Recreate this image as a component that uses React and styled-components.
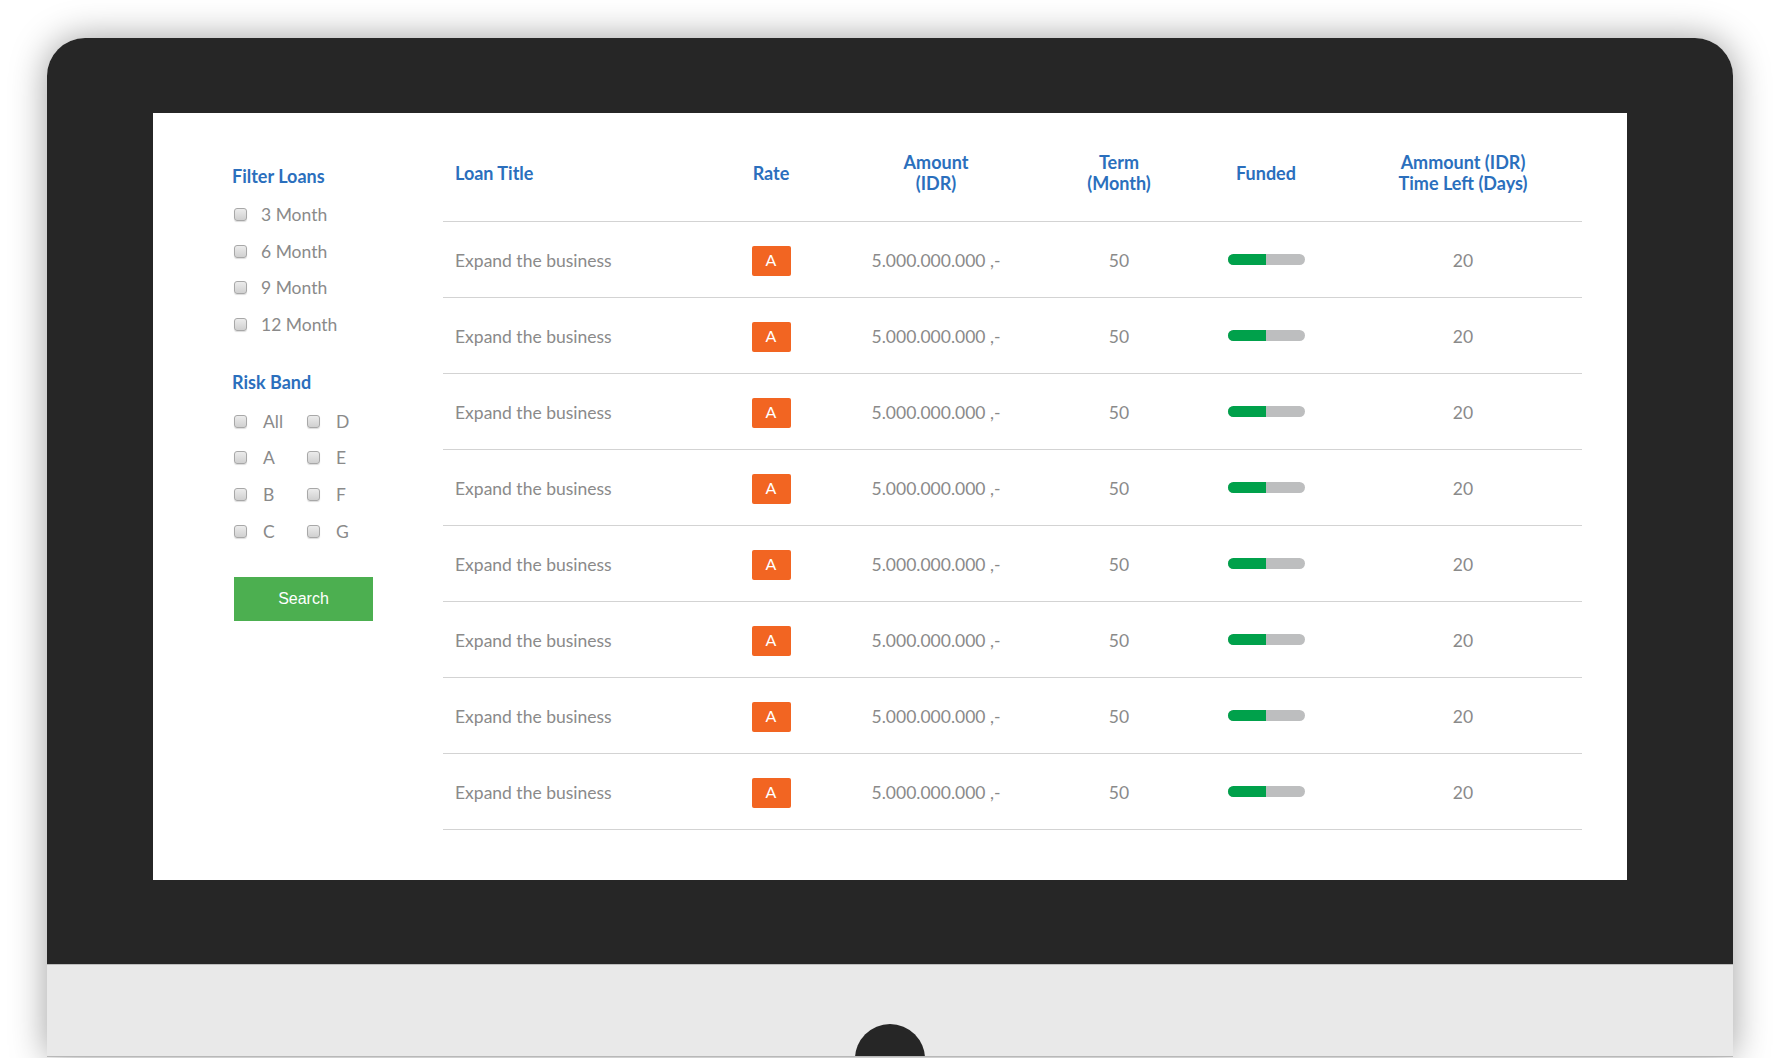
import React from "react";
import styled, { createGlobalStyle } from "styled-components";

const GlobalStyle = createGlobalStyle`
  html, body {
    margin: 0;
    padding: 0;
    background: #ffffff;
    overflow: hidden;
  }
  body {
    font-family: Lato, "Open Sans", sans-serif;
  }
`;

//data
const loans = Array.from({ length: 8 }, () => ({
  title: "Expand the business",
  rate: "A",
  amount: "5.000.000.000 ,-",
  term: 50,
  funded: 50,
  left: 20,
}));
const months = ["3 Month", "6 Month", "9 Month", "12 Month"];
const bands = ["All", "D", "A", "E", "B", "F", "C", "G"];
const columns = "277px 102px 228px 138px 156px 238px";

//monitor
const Page = styled.div`
  width: 1780px;
  height: 1058px;
  padding: 38px 0 0 47px;
  box-sizing: border-box;
`;
const Monitor = styled.div`
  width: 1686px;
  border-radius: 38px 38px 0 0;
  box-shadow: 0 0 36px rgba(0, 0, 0, 0.38);
`;
const Bezel = styled.div`
  background: #262626;
  border-radius: 38px 38px 0 0;
  padding: 75px 106px 84px;
`;
const Chin = styled.div`
  height: 93px;
  background: #e9e9e9;
  border-top: 1px solid #bcbcbc;
  border-bottom: 1px solid #b8b8b8;
  display: flex;
  justify-content: center;
  padding-top: 59px;
  box-sizing: border-box;
  overflow: hidden;
`;
const Knob = styled.div`
  width: 70px;
  height: 70px;
  flex: none;
  border-radius: 50%;
  background: #262626;
`;
const Screen = styled.div`
  height: 767px;
  background: #fff;
  display: flex;
  padding: 0 45px 0 79px;
  box-sizing: border-box;
`;

//sidebar
const Sidebar = styled.aside`
  width: 211px;
  flex: none;
  padding-top: 51px;
`;
const Heading = styled.h3`
  margin: 0 0 ${(p) => p.$gap || 0}px;
  font-size: 18px;
  line-height: 24px;
  font-weight: 700;
  color: #2b6fbd;
`;
const Options = styled.div`
  display: grid;
  grid-template-columns: ${(p) => p.$cols || "1fr"};
  grid-auto-rows: 36.7px;
  margin-bottom: ${(p) => p.$after || 0}px;
`;
const Option = styled.label`
  display: flex;
  align-items: center;
  gap: ${(p) => p.$gap || 14}px;
  padding-left: 2px;
  font-size: 17.5px;
  color: #8a8a8a;
`;
const Check = styled.input.attrs({ type: "checkbox" })`
  appearance: none;
  margin: 0;
  width: 13px;
  height: 13px;
  flex: none;
  border: 1px solid #a8a8a8;
  border-radius: 3px;
  background: linear-gradient(#ececec, #d0d0d0);
  box-shadow: 0 1px 1px rgba(0, 0, 0, 0.14);
  box-sizing: border-box;
`;
const SearchButton = styled.button`
  margin-left: 2px;
  width: 139px;
  height: 44px;
  border: none;
  background: #4caf50;
  color: #fff;
  font-family: "Liberation Sans", Arial, sans-serif;
  font-size: 16px;
`;

//table
const Table = styled.div`
  flex: 1;
  margin-top: 16px;
`;
const Row = styled.div`
  display: grid;
  grid-template-columns: ${columns};
  align-items: center;
  height: ${(p) => p.$h}px;
  padding-top: ${(p) => p.$drop || 0}px;
  padding-bottom: ${(p) => p.$lift || 0}px;
  box-sizing: border-box;
  border-bottom: 1px solid #d3d3d3;
`;
const Th = styled.div`
  font-size: 18px;
  line-height: 21px;
  font-weight: 700;
  color: #2b6fbd;
  text-align: ${(p) => (p.$left ? "left" : "center")};
  padding-left: ${(p) => (p.$left ? 12 : 0)}px;
`;
const Td = styled.div`
  display: flex;
  justify-content: ${(p) => (p.$left ? "flex-start" : "center")};
  padding-left: ${(p) => (p.$left ? 12 : 0)}px;
  font-size: 17.5px;
  color: #8a8a8a;
`;
const Badge = styled.span`
  width: 39px;
  height: 30px;
  border-radius: 2px;
  background: #f26522;
  color: #fff;
  font-size: 16px;
  display: flex;
  align-items: center;
  justify-content: center;
  padding-bottom: 2px;
  box-sizing: border-box;
`;
const Bar = styled.div`
  width: 77px;
  height: 11px;
  border-radius: 6px;
  background: #bdbebf;
  overflow: hidden;
  margin-top: -2px;
`;
const Fill = styled.div`
  height: 100%;
  background: #00a14b;
`;

export default function App() {
  return (
    <>
      <GlobalStyle />
      <Page>
        <Monitor>
          <Bezel>
            <Screen>
              <Sidebar>
                <Heading $gap={8}>Filter Loans</Heading>
                <Options $after={27}>
                  {months.map((m) => (
                    <Option key={m}>
                      <Check />
                      {m}
                    </Option>
                  ))}
                </Options>
                <Heading $gap={9}>Risk Band</Heading>
                <Options $cols="73px 1fr" $after={27}>
                  {bands.map((b) => (
                    <Option key={b} $gap={16}>
                      <Check />
                      {b}
                    </Option>
                  ))}
                </Options>
                <SearchButton>Search</SearchButton>
              </Sidebar>
              <Table>
                <Row $h={93} $lift={4}>
                  <Th $left>Loan Title</Th>
                  <Th>Rate</Th>
                  <Th>
                    Amount
                    <br />
                    (IDR)
                  </Th>
                  <Th>
                    Term
                    <br />
                    (Month)
                  </Th>
                  <Th>Funded</Th>
                  <Th>
                    Ammount (IDR)
                    <br />
                    Time Left (Days)
                  </Th>
                </Row>
                {loans.map((l, i) => (
                  <Row key={i} $h={76} $drop={2}>
                    <Td $left>{l.title}</Td>
                    <Td>
                      <Badge>{l.rate}</Badge>
                    </Td>
                    <Td>{l.amount}</Td>
                    <Td>{l.term}</Td>
                    <Td>
                      <Bar>
                        <Fill style={{ width: `${l.funded}%` }} />
                      </Bar>
                    </Td>
                    <Td>{l.left}</Td>
                  </Row>
                ))}
              </Table>
            </Screen>
          </Bezel>
          <Chin>
            <Knob />
          </Chin>
        </Monitor>
      </Page>
    </>
  );
}
